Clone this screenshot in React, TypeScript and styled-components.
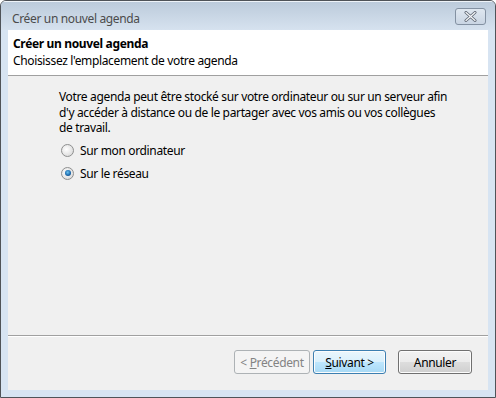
import React from "react";
import styled, { createGlobalStyle } from "styled-components";

const Global = createGlobalStyle`
  html, body { margin: 0; padding: 0; background: #ffffff; }
  body { font-family: "Noto Sans", "Open Sans", sans-serif; font-size: 12px; letter-spacing: -0.35px; color: #000; }
`;

const Window = styled.div`
  box-sizing: border-box;
  width: 496px;
  height: 398px;
  border: 1px solid #4f5358;
  border-radius: 6px 6px 0 0;
  background: #d7e4f2;
  display: flex;
  flex-direction: column;
  overflow: hidden;
`;

const TitleBar = styled.div`
  height: 29px;
  flex: none;
  display: flex;
  align-items: center;
  justify-content: space-between;
  padding: 0 9px 0 11px;
  background: linear-gradient(#bccbdb, #d6e2ef);
  border-top: 1px solid #eef3f8;
  box-sizing: border-box;
`;

const TitleText = styled.span`
  font-size: 12px;
  color: #4b4b4b;
  padding-top: 4px;
`;

const CloseButton = styled.div`
  width: 29px;
  height: 15px;
  margin-top: 1px;
  border: 1px solid #8391a2;
  border-radius: 3px;
  background: linear-gradient(#dfe7f0, #c9d5e3);
  display: flex;
  align-items: center;
  justify-content: center;
`;

const Frame = styled.div`
  flex: 1;
  display: flex;
  flex-direction: column;
  padding: 0 7px 7px 7px;
`;

const Client = styled.div`
  flex: 1;
  display: flex;
  flex-direction: column;
  background: #f0f0f0;
`;

const Header = styled.div`
  height: 46px;
  background: #ffffff;
  border-bottom: 1px solid #a0a0a0;
  padding: 5px 0 0 5px;
  box-sizing: border-box;
`;

const HeaderTitle = styled.div`
  font-weight: bold;
  line-height: 17px;
`;

const HeaderSub = styled.div`
  line-height: 18px;
`;

const Body = styled.div`
  flex: 1;
  padding: 13px 40px 0 51px;
  border-bottom: 1px solid #a0a0a0;
`;

const Paragraph = styled.p`
  margin: 0 0 3px 0;
  line-height: 15.5px;
`;

const RadioRow = styled.label`
  display: flex;
  align-items: center;
  gap: 6px;
  height: 23px;
  padding-left: 2px;
`;

const RadioDot = styled.span<{ $checked?: boolean }>`
  width: 11px;
  height: 11px;
  border-radius: 50%;
  border: 1px solid #8e8f8f;
  background: radial-gradient(circle at 40% 40%, #ffffff, #d2d2d2);
  display: flex;
  align-items: center;
  justify-content: center;
  &::after {
    content: "";
    display: ${(p) => (p.$checked ? "block" : "none")};
    width: 6px;
    height: 6px;
    border-radius: 50%;
    background: radial-gradient(circle at 45% 40%, #6cc3ef 0%, #1d6cb0 55%, #0a2f5e 100%);
  }
`;

const Footer = styled.div`
  height: 50px;
  display: flex;
  align-items: center;
  justify-content: flex-end;
  padding: 0 16px 3px 0;
  border-top: 1px solid #ffffff;
`;

const Button = styled.div<{ $disabled?: boolean; $default?: boolean; $gap?: number }>`
  box-sizing: border-box;
  height: 24px;
  display: flex;
  align-items: center;
  justify-content: center;
  border-radius: 3px;
  margin-left: ${(p) => p.$gap ?? 0}px;
  border: 1px solid ${(p) => (p.$disabled ? "#adb2b5" : p.$default ? "#3c7fb1" : "#707070")};
  background: ${(p) =>
    p.$disabled
      ? "#f4f4f4"
      : p.$default
      ? "linear-gradient(#eaf6fd 0%, #d9f0fc 50%, #bee6fd 51%, #a7d9f5 100%)"
      : "linear-gradient(#f2f2f2 0%, #ebebeb 50%, #dddddd 51%, #cfcfcf 100%)"};
  box-shadow: inset 0 0 0 1px ${(p) => (p.$disabled ? "#f4f4f4" : "#fcfcfc")};
  color: ${(p) => (p.$disabled ? "#838383" : "#000")};
`;

const U = styled.span`
  text-decoration: underline;
`;

export default function App() {
  return (
    <>
      <Global />
      <Window>
        <TitleBar>
          <TitleText>Créer un nouvel agenda</TitleText>
          <CloseButton>
            <svg width="13" height="11" viewBox="0 0 13 11">
              <path d="M2 1.5 L11 9.5 M11 1.5 L2 9.5" stroke="#5d6572" strokeWidth="3" strokeLinecap="round" />
              <path d="M2 1.5 L11 9.5 M11 1.5 L2 9.5" stroke="#f4f6f8" strokeWidth="1.3" strokeLinecap="round" />
            </svg>
          </CloseButton>
        </TitleBar>
        <Frame>
          <Client>
            <Header>
              <HeaderTitle>Créer un nouvel agenda</HeaderTitle>
              <HeaderSub>Choisissez l'emplacement de votre agenda</HeaderSub>
            </Header>
            <Body>
              <Paragraph>
                Votre agenda peut être stocké sur votre ordinateur ou sur un serveur afin d'y accéder à
                distance ou de le partager avec vos amis ou vos collègues de travail.
              </Paragraph>
              <RadioRow>
                <RadioDot />
                Sur mon ordinateur
              </RadioRow>
              <RadioRow>
                <RadioDot $checked />
                Sur le réseau
              </RadioRow>
            </Body>
            <Footer>
              <Button $disabled style={{ width: 76 }}>
                &lt;&nbsp;<U>P</U>récédent
              </Button>
              <Button $default $gap={3} style={{ width: 73 }}>
                <U>S</U>uivant &gt;
              </Button>
              <Button $gap={12} style={{ width: 74 }}>
                Annuler
              </Button>
            </Footer>
          </Client>
        </Frame>
      </Window>
    </>
  );
}
